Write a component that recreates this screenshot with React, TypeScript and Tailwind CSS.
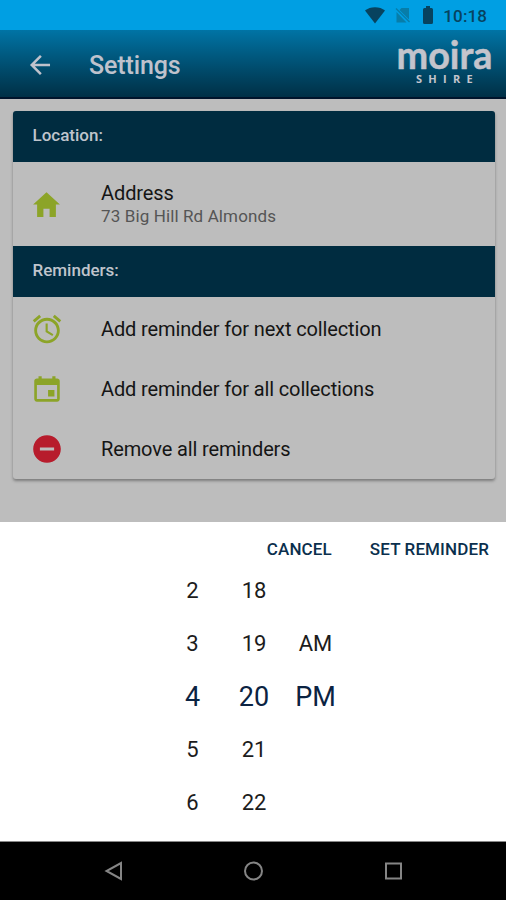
import type { ReactNode } from "react";
import {
  IoMdAlarm,
  IoMdArrowBack,
  IoMdCalendar,
  IoMdHome,
  IoMdRemoveCircle,
} from "react-icons/io";

const HOURS = ["2", "3", "4", "5", "6"];
const MINUTES = ["18", "19", "20", "21", "22"];
const PERIODS = ["", "AM", "PM", "", ""];

function StatusBar() {
  return (
    <div className="flex h-[30px] shrink-0 items-center bg-[#009fe3] pr-[19px] text-[#07435f]">
      <svg className="ml-auto" width="22" height="18" viewBox="0 0 22 18">
        <path d="M11 17.500 1 4.500C6 0 16 0 21 4.500Z" fill="currentColor" />
      </svg>
      <svg className="ml-[9px]" width="16" height="18" viewBox="0 0 16 18">
        <path d="M6.500 2H14V13.500L4.500 4Z M1.500 6 11.500 16.500H1.500Z" fill="#077da9" />
        <path d="M1 2.500 14.500 16" stroke="#077da9" strokeWidth="1.300" />
      </svg>
      <svg className="ml-[11px]" width="12" height="18" viewBox="0 0 12 18">
        <path d="M4 0H8V2H9.500Q11 2 11 3.500V16.500Q11 18 9.500 18H2.500Q1 18 1 16.500V3.500Q1 2 2.500 2H4Z" fill="currentColor" />
      </svg>
      <span className="ml-[9px] mt-px text-[17px] font-medium leading-5 tracking-[0.1px]">10:18</span>
    </div>
  );
}

function Logo() {
  return (
    <svg width="98" height="67" viewBox="0 0 98 67" fill="#c4c4cc" className="ml-auto">
      <text
        x="0.500"
        y="38.500"
        textLength="96"
        lengthAdjust="spacingAndGlyphs"
        fontSize="39"
        fontWeight="700"
        stroke="#c4c4cc"
        strokeWidth="0.500"
        strokeLinejoin="round"
        className="font-[Lato,sans-serif]"
      >
        moira
      </text>
      <text
        x="20"
        y="52.500"
        letterSpacing="6.300"
        fontSize="11"
        fontWeight="700"
        className="font-['Open_Sans',sans-serif]"
      >
        SHIRE
      </text>
    </svg>
  );
}

function SectionHeader({ children }: { children: ReactNode }) {
  return (
    <div className="flex h-[51px] items-center bg-[#002c40] px-[19.500px] pb-[2px] text-[17px] font-medium text-[#bfc4cc]">
      {children}
    </div>
  );
}

function Row({ icon, children }: { icon: ReactNode; children: ReactNode }) {
  return (
    <div className="flex h-[60px] items-center pl-[17px] text-xl tracking-[-0.130px] text-[#151515]">
      <span className="w-[71px]">{icon}</span>
      <span>{children}</span>
    </div>
  );
}

function PickerColumn({ values, className }: { values: string[]; className: string }) {
  return (
    <div className={`flex flex-col items-center ${className}`}>
      {values.map((value, i) => (
        <div
          key={i}
          className={`flex h-[53px] items-center ${i === 2 ? "pt-px text-[27px] text-[#0b2342]" : "text-[22px] text-[#1c1c1c]"}`}
        >
          {value}
        </div>
      ))}
    </div>
  );
}

export default function App() {
  return (
    <div className="flex h-[900px] w-[506px] flex-col overflow-hidden bg-[#bdbdbd] font-[Roboto,sans-serif]">
      <StatusBar />

      <header className="flex h-[69px] shrink-0 items-center border-b-2 border-[#00142b] bg-linear-to-b from-[#0074a5] to-[#003046] pl-[25px] pr-[12px]">
        <IoMdArrowBack size={30} color="#bfc2cc" className="mt-[3px]" />
        <h1 className="ml-[34px] mt-[4px] text-[25px] font-medium tracking-[-0.130px] text-[#bfc2cc]">Settings</h1>
        <Logo />
      </header>

      <main className="h-[423px] shrink-0 pl-[13px] pr-[11px] pt-[12px]">
        <div className="h-[368px] overflow-hidden rounded-[3px] shadow-[0_2px_3px_rgba(0,0,0,0.35)]">
          <SectionHeader>Location:</SectionHeader>
          <div className="flex h-[84px] items-center pl-[17px]">
            <span className="w-[71px]">
              <IoMdHome size={33} color="#8ca428" />
            </span>
            <div>
              <div className="text-xl leading-[24px] tracking-[-0.100px] text-[#151515]">Address</div>
              <div className="text-[17px] leading-[22px] tracking-[0.120px] text-[#555]">73 Big Hill Rd Almonds</div>
            </div>
          </div>
          <SectionHeader>Reminders:</SectionHeader>
          <div className="pt-[2px]">
            <Row icon={<IoMdAlarm size={34} color="#8ca428" />}>Add reminder for next collection</Row>
            <Row icon={<IoMdCalendar size={34} color="#8ca428" />}>Add reminder for all collections</Row>
            <Row icon={<IoMdRemoveCircle size={34} color="#b71c2c" />}>Remove all reminders</Row>
          </div>
        </div>
      </main>

      {/* Time picker sheet */}
      <section className="h-[320px] shrink-0 border-b border-[#888] bg-white">
        <div className="flex h-[42px] items-end justify-end gap-[38px] pb-[3px] pr-[17px] text-[17px] font-medium leading-[24px] tracking-[0.120px] text-[#0b2f4d]">
          <button>CANCEL</button>
          <button>SET REMINDER</button>
        </div>
        <div className="flex pl-[162px]">
          <PickerColumn values={HOURS} className="w-[61px]" />
          <PickerColumn values={MINUTES} className="w-[62px]" />
          <PickerColumn values={PERIODS} className="w-[61px]" />
        </div>
      </section>

      <nav className="flex flex-1 items-center bg-black">
        <svg width="506" height="58" viewBox="0 0 506 58" fill="none" stroke="#858585" strokeWidth="2">
          <path d="M121 21V37L106.500 29Z" />
          <circle cx="253.500" cy="29" r="8.500" />
          <rect x="386" y="21.500" width="15" height="15" />
        </svg>
      </nav>
    </div>
  );
}
